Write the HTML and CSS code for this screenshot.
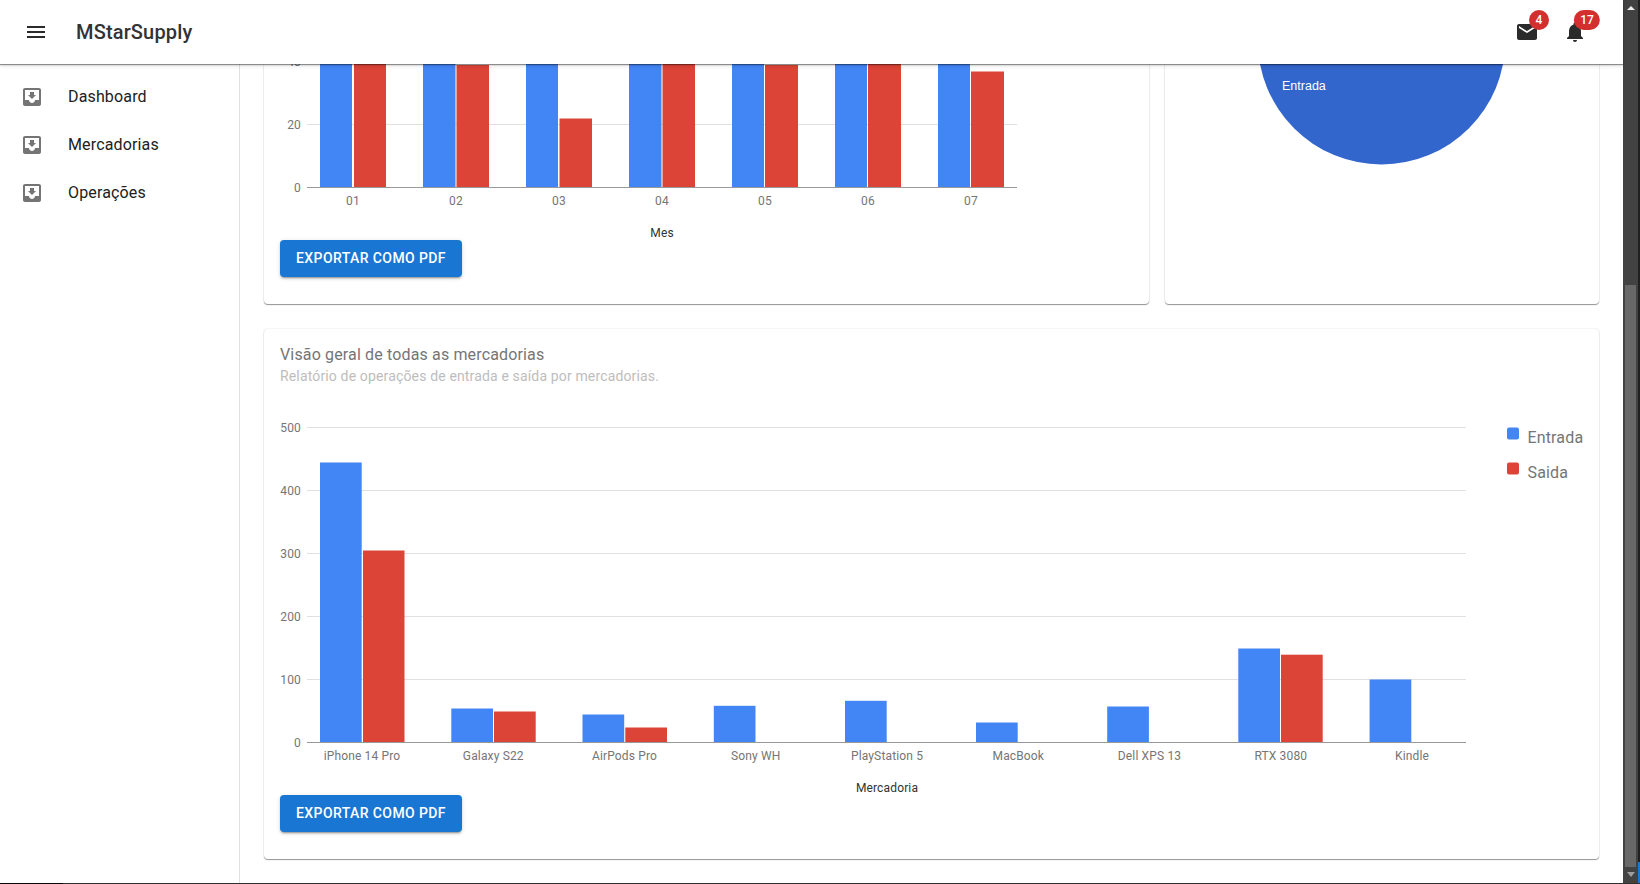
FILE: index.html
```html
<!DOCTYPE html>
<html>
<head>
    <meta charset="utf-8" />
    <title>MStarSupply</title>
    <link rel="stylesheet" href="styles.css">
</head>
<body>
    <div class="window">
        <div class="page">
            <header class="appbar">
                <svg class="icon menu-icon" viewBox="0 0 24 24"><path d="M3 18h18v-2H3v2zm0-5h18v-2H3v2zm0-7v2h18V6H3z"/></svg>
                <div class="brand">MStarSupply</div>
                <div class="appbar-actions">
                    <div class="action">
                        <svg class="icon" viewBox="0 0 24 24"><path d="M20 4H4c-1.1 0-1.99.9-1.99 2L2 18c0 1.1.9 2 2 2h16c1.1 0 2-.9 2-2V6c0-1.1-.9-2-2-2zm0 4l-8 5-8-5V6l8 5 8-5v2z"/></svg>
                        <span class="badge">4</span>
                    </div>
                    <div class="action">
                        <svg class="icon" viewBox="0 0 24 24"><path d="M12 22c1.1 0 2-.9 2-2h-4c0 1.1.89 2 2 2zm6-6v-5c0-3.07-1.64-5.64-4.5-6.32V4c0-.83-.67-1.5-1.5-1.5s-1.5.67-1.5 1.5v.68C7.63 5.36 6 7.92 6 11v5l-2 2v1h16v-1l-2-2z"/></svg>
                        <span class="badge">17</span>
                    </div>
                </div>
            </header>

            <div class="content">
                <nav class="sidebar">
                    <a class="nav-item">
                        <svg class="icon nav-icon" viewBox="0 0 24 24"><path d="M19 3H4.99c-1.11 0-1.98.9-1.98 2L3 19c0 1.1.88 2 1.99 2H19c1.1 0 2-.9 2-2V5c0-1.1-.9-2-2-2zm0 12h-4c0 1.66-1.35 3-3 3s-3-1.34-3-3H4.99V5H19v10zm-3-5h-2V7h-4v3H8l4 4 4-4z"/></svg>
                        Dashboard
                    </a>
                    <a class="nav-item">
                        <svg class="icon nav-icon" viewBox="0 0 24 24"><path d="M19 3H4.99c-1.11 0-1.98.9-1.98 2L3 19c0 1.1.88 2 1.99 2H19c1.1 0 2-.9 2-2V5c0-1.1-.9-2-2-2zm0 12h-4c0 1.66-1.35 3-3 3s-3-1.34-3-3H4.99V5H19v10zm-3-5h-2V7h-4v3H8l4 4 4-4z"/></svg>
                        Mercadorias
                    </a>
                    <a class="nav-item">
                        <svg class="icon nav-icon" viewBox="0 0 24 24"><path d="M19 3H4.99c-1.11 0-1.98.9-1.98 2L3 19c0 1.1.88 2 1.99 2H19c1.1 0 2-.9 2-2V5c0-1.1-.9-2-2-2zm0 12h-4c0 1.66-1.35 3-3 3s-3-1.34-3-3H4.99V5H19v10zm-3-5h-2V7h-4v3H8l4 4 4-4z"/></svg>
                        Operações
                    </a>
                </nav>

                <main class="main">
                    <div class="top-row">
                        <section class="card card-monthly">
                            <!-- chart origin: x 280, y 64 on the page -->
                            <svg class="chart chart-monthly" viewBox="280 64 837 176">
                                <line class="grid" x1="307" x2="1017" y1="124.5" y2="124.5"/>
                                <text class="tick tick-y" x="301" y="65.5">40</text>
                                <text class="tick tick-y" x="301" y="128.5">20</text>
                                <text class="tick tick-y" x="301" y="191.5">0</text>

                                <rect class="bar-in" x="320" y="60" width="32" height="127"/>
                                <rect class="bar-out" x="354" y="60" width="32" height="127"/>
                                <rect class="bar-in" x="423" y="60" width="32.500" height="127"/>
                                <rect class="bar-out" x="456.500" y="65" width="32.500" height="122"/>
                                <rect class="bar-in" x="526" y="60" width="32" height="127"/>
                                <rect class="bar-out" x="559.500" y="118.500" width="32.500" height="68.500"/>
                                <rect class="bar-in" x="629" y="60" width="32.500" height="127"/>
                                <rect class="bar-out" x="662.500" y="60" width="32.500" height="127"/>
                                <rect class="bar-in" x="732" y="60" width="32" height="127"/>
                                <rect class="bar-out" x="765" y="65" width="33" height="122"/>
                                <rect class="bar-in" x="835" y="60" width="32" height="127"/>
                                <rect class="bar-out" x="868" y="60" width="33" height="127"/>
                                <rect class="bar-in" x="938" y="60" width="32" height="127"/>
                                <rect class="bar-out" x="971" y="71.500" width="33" height="115.500"/>

                                <line class="axis" x1="307" x2="1017" y1="187.500" y2="187.500"/>
                                <text class="tick tick-x" x="353" y="205">01</text>
                                <text class="tick tick-x" x="456" y="205">02</text>
                                <text class="tick tick-x" x="559" y="205">03</text>
                                <text class="tick tick-x" x="662" y="205">04</text>
                                <text class="tick tick-x" x="765" y="205">05</text>
                                <text class="tick tick-x" x="868" y="205">06</text>
                                <text class="tick tick-x" x="971" y="205">07</text>
                                <text class="axis-title" x="662" y="237">Mes</text>
                            </svg>
                            <button class="export-btn">Exportar como PDF</button>
                        </section>

                        <section class="card card-pie">
                            <svg class="chart chart-pie" viewBox="1166 64 433 240">
                                <circle class="pie-slice" cx="1382.500" cy="40.800" r="123.700"/>
                                <text class="pie-label" x="1283" y="90">Entrada</text>
                            </svg>
                        </section>
                    </div>

                    <section class="card card-products">
                        <div class="card-title">Visão geral de todas as mercadorias</div>
                        <div class="card-subtitle">Relatório de operações de entrada e saída por mercadorias.</div>
                        <!-- chart origin: x 280, y 400 on the page -->
                        <svg class="chart chart-products" viewBox="280 400 1303 395">
                            <line class="grid" x1="307" x2="1466" y1="427.500" y2="427.500"/>
                            <line class="grid" x1="307" x2="1466" y1="490.500" y2="490.500"/>
                            <line class="grid" x1="307" x2="1466" y1="553.500" y2="553.500"/>
                            <line class="grid" x1="307" x2="1466" y1="616.500" y2="616.500"/>
                            <line class="grid" x1="307" x2="1466" y1="679.500" y2="679.500"/>
                            <text class="tick tick-y" x="301" y="431.500">500</text>
                            <text class="tick tick-y" x="301" y="494.500">400</text>
                            <text class="tick tick-y" x="301" y="557.500">300</text>
                            <text class="tick tick-y" x="301" y="620.500">200</text>
                            <text class="tick tick-y" x="301" y="683.500">100</text>
                            <text class="tick tick-y" x="301" y="746.500">0</text>

                            <rect class="bar-in" x="320" y="462.500" width="41.700" height="280"/>
                            <rect class="bar-out" x="363" y="550.500" width="41.500" height="192"/>
                            <rect class="bar-in" x="451.300" y="708.500" width="41.700" height="34"/>
                            <rect class="bar-out" x="494" y="711.500" width="41.700" height="31"/>
                            <rect class="bar-in" x="582.500" y="714.500" width="41.700" height="28"/>
                            <rect class="bar-out" x="625.300" y="727.500" width="41.700" height="15"/>
                            <rect class="bar-in" x="713.800" y="705.800" width="41.700" height="36.700"/>
                            <rect class="bar-in" x="845" y="700.800" width="41.700" height="41.700"/>
                            <rect class="bar-in" x="976" y="722.500" width="41.700" height="20"/>
                            <rect class="bar-in" x="1107.200" y="706.500" width="41.700" height="36"/>
                            <rect class="bar-in" x="1238.300" y="648.500" width="41.700" height="94"/>
                            <rect class="bar-out" x="1281" y="654.700" width="41.700" height="87.800"/>
                            <rect class="bar-in" x="1369.600" y="679.500" width="41.700" height="63"/>

                            <line class="axis" x1="307" x2="1466" y1="742.500" y2="742.500"/>
                            <text class="tick tick-x" x="362" y="759.500">iPhone 14 Pro</text>
                            <text class="tick tick-x" x="493.300" y="759.500">Galaxy S22</text>
                            <text class="tick tick-x" x="624.500" y="759.500">AirPods Pro</text>
                            <text class="tick tick-x" x="755.800" y="759.500">Sony WH</text>
                            <text class="tick tick-x" x="887" y="759.500">PlayStation 5</text>
                            <text class="tick tick-x" x="1018.300" y="759.500">MacBook</text>
                            <text class="tick tick-x" x="1149.500" y="759.500">Dell XPS 13</text>
                            <text class="tick tick-x" x="1280.800" y="759.500">RTX 3080</text>
                            <text class="tick tick-x" x="1412" y="759.500">Kindle</text>
                            <text class="axis-title" x="887" y="792">Mercadoria</text>

                            <rect class="bar-in" x="1507" y="427.500" width="12" height="12" rx="2"/>
                            <rect class="bar-out" x="1507" y="462.500" width="12" height="12" rx="2"/>
                            <text class="legend-text" x="1527.500" y="442.500">Entrada</text>
                            <text class="legend-text" x="1527.500" y="477.500">Saida</text>
                        </svg>
                        <button class="export-btn">Exportar como PDF</button>
                    </section>
                </main>
            </div>
        </div>

        <div class="scrollbar">
            <span class="arrow-up"></span>
            <div class="thumb"></div>
            <span class="arrow-down"></span>
        </div>
        <div class="desktop-edge">
            <div class="desktop-edge-blue"></div>
        </div>
    </div>
    <div class="desktop-line"></div>
</body>
</html>
```

FILE: styles.css
```css
html, body {
    margin: 0;
    height: 884px;
    overflow: hidden;
    background: #fff;
}
body {
    font-family: Roboto, "Liberation Sans", sans-serif;
    color: #212121;
}
.window {
    display: flex;
    height: 883px;
}
.page {
    flex: 1;
    min-width: 0;
    display: flex;
    flex-direction: column;
}
.icon {
    display: block;
    width: 24px;
    height: 24px;
    fill: #2b2b2b;
}

/* app bar */
.appbar {
    position: relative;
    z-index: 2;
    flex: none;
    height: 64px;
    display: flex;
    align-items: center;
    padding: 0 24px;
    box-sizing: border-box;
    background: #fff;
    box-shadow: 0 1px 1px rgba(0,0,0,.4), 0 2px 4px rgba(0,0,0,.12);
}
.brand {
    margin-left: 28px;
    font-size: 20px;
    font-weight: 500;
    letter-spacing: .15px;
    color: #333;
}
.appbar-actions {
    margin-left: auto;
    display: flex;
}
.action {
    position: relative;
    padding: 12px;
}
.badge {
    position: absolute;
    top: 12px;
    right: 12px;
    transform: translate(50%, -50%);
    min-width: 20px;
    height: 20px;
    padding: 0 6px;
    box-sizing: border-box;
    border-radius: 10px;
    background: #d32f2f;
    color: #fff;
    font-size: 12px;
    font-weight: 500;
    line-height: 20px;
    text-align: center;
}

/* sidebar */
.content {
    flex: 1;
    display: flex;
    min-height: 0;
}
.sidebar {
    flex: none;
    width: 240px;
    box-sizing: border-box;
    padding-top: 8px;
    border-right: 1px solid #e0e0e0;
}
.nav-item {
    height: 48px;
    display: flex;
    align-items: center;
    gap: 24px;
    padding-left: 20px;
    font-size: 16px;
    letter-spacing: .15px;
}
.nav-icon {
    margin-top: 2px;
    fill: #757575;
}

/* main column */
.main {
    flex: 1;
    min-width: 0;
    padding: 0 24px;
    display: flex;
    flex-direction: column;
    gap: 25px;
}
.top-row {
    display: flex;
    gap: 16px;
}
.card {
    box-sizing: border-box;
    background: #fff;
    border-radius: 4px;
    box-shadow: 0 1px 1px rgba(0,0,0,.4), 0 0 2px rgba(0,0,0,.14);
}
.card-monthly {
    width: 885px;
    height: 240px;
    padding: 0 16px;
    border-radius: 0 0 4px 4px;
}
.card-pie {
    width: 434px;
    height: 240px;
    border-radius: 0 0 4px 4px;
}
.card-products {
    height: 530px;
    padding: 16px;
}
.card-title {
    font-size: 16px;
    line-height: 20px;
    letter-spacing: .15px;
    color: #757575;
}
.card-subtitle {
    margin-top: 1px;
    font-size: 14px;
    line-height: 20px;
    letter-spacing: .15px;
    color: #bdbdbd;
}

/* charts */
.chart {
    display: block;
}
.chart-monthly {
    width: 837px;
    height: 176px;
}
.chart-pie {
    width: 433px;
    height: 240px;
}
.chart-products {
    width: 1303px;
    height: 395px;
    margin-top: 14px;
}
.grid {
    stroke: #e0e0e0;
    stroke-width: 1;
}
.axis {
    stroke: #999;
    stroke-width: 1;
}
.bar-in {
    fill: #4285f4;
}
.bar-out {
    fill: #db4437;
}
.tick {
    font-size: 12px;
    letter-spacing: .15px;
    fill: #757575;
}
.tick-y {
    text-anchor: end;
}
.tick-x, .axis-title {
    text-anchor: middle;
}
.axis-title {
    font-size: 12px;
    letter-spacing: .15px;
    fill: #333;
}
.legend-text {
    font-size: 16px;
    letter-spacing: .15px;
    fill: #757575;
}
.pie-slice {
    fill: #36c;
}
.pie-label {
    font-family: "Liberation Sans", sans-serif;
    font-size: 12.500px;
    fill: #fff;
}

/* button */
.export-btn {
    display: block;
    width: 182px;
    height: 36.500px;
    padding: 0;
    border: 0;
    border-radius: 4px;
    background: #1976d2;
    color: #fff;
    font-family: Roboto, sans-serif;
    font-size: 14px;
    font-weight: 500;
    letter-spacing: .4px;
    text-transform: uppercase;
    box-shadow: 0 3px 1px -2px rgba(0,0,0,.2), 0 2px 2px rgba(0,0,0,.14), 0 1px 5px rgba(0,0,0,.12);
}

/* browser scrollbar, it's part of the screenshot */
.scrollbar {
    flex: none;
    width: 15px;
    display: flex;
    flex-direction: column;
    align-items: center;
    background: #424242;
}
.arrow-up, .arrow-down {
    flex: none;
    width: 0;
    height: 0;
    border-left: 4px solid transparent;
    border-right: 4px solid transparent;
}
.arrow-up {
    margin-top: 6px;
    border-bottom: 4px solid #eee;
}
.arrow-down {
    margin-top: 5px;
    border-top: 5px solid #9e9e9e;
}
.thumb {
    flex: none;
    width: 11px;
    height: 582px;
    margin-top: 275px;
    background: #686868;
}
.desktop-edge {
    flex: none;
    width: 2px;
    display: flex;
    flex-direction: column;
    justify-content: flex-end;
    background: #202020;
}
.desktop-edge-blue {
    height: 21px;
    background: #1478d4;
}
.desktop-line {
    height: 1px;
    background: linear-gradient(to right, #0c0609 63px, #303030 63px);
}
```
